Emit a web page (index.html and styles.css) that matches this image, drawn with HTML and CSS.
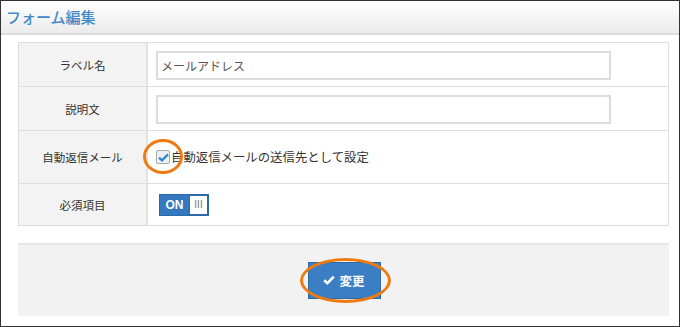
FILE: index.html
```html
<!DOCTYPE html>
<html lang="ja">

<head>
    <meta charset="UTF-8">
    <title>フォーム編集</title>
    <link rel="stylesheet" href="styles.css">
</head>

<body>
    <div class="panel">
        <header class="panel-head">
            <h1>フォーム編集</h1>
        </header>

        <div class="panel-body">
            <div class="formTable">
                <div class="row">
                    <div class="label">ラベル名</div>
                    <div class="value">
                        <input class="textInput" type="text" value="メールアドレス">
                    </div>
                </div>
                <div class="row">
                    <div class="label">説明文</div>
                    <div class="value">
                        <input class="textInput" type="text" value="">
                    </div>
                </div>
                <div class="row row-tall">
                    <div class="label">自動返信メール</div>
                    <div class="value">
                        <label class="check">
                            <span class="checkBox">
                                <svg width="11" height="9" viewBox="0 0 11 9"><path d="M1 4.6 L4 7.4 L10 1.4" fill="none" stroke="#2f86c8" stroke-width="2.2"/></svg>
                            </span>
                            <span class="checkText">自動返信メールの送信先として設定</span>
                            <span class="mark mark-check"></span>
                        </label>
                    </div>
                </div>
                <div class="row row-last">
                    <div class="label">必須項目</div>
                    <div class="value">
                        <div class="switch">
                            <span class="switch-on">ON</span>
                            <span class="switch-handle">III</span>
                        </div>
                    </div>
                </div>
            </div>

            <div class="actions">
                <button class="btnSubmit" type="button">
                    <svg width="12" height="10" viewBox="0 0 12 10"><path d="M1.2 5.2 L4.4 8.2 L10.8 1.6" fill="none" stroke="#fff" stroke-width="2.6"/></svg>
                    変更
                    <span class="mark mark-btn"></span>
                </button>
            </div>
        </div>
    </div>
</body>

</html>
```

FILE: styles.css
```css
* {
    margin: 0;
    padding: 0;
    box-sizing: border-box;
}

html,
body {
    width: 100%;
    height: 100%;
    background: #fff;
    font-family: "Noto Sans CJK JP", "Noto Sans", sans-serif;
    color: #333;
}

.panel {
    width: 680px;
    height: 327px;
    border: solid 1px #333;
    display: flex;
    flex-direction: column;
}

.panel-head {
    height: 34px;
    background: linear-gradient(#ffffff, #ebebeb);
    border-bottom: solid 2px #dcdcdc;
    padding-left: 5px;
    display: flex;
    align-items: center;
}

.panel-head h1 {
    font-size: 15px;
    font-weight: 500;
    color: #4388c6;
    margin-top: -1px;
}

.panel-body {
    padding: 7px 10px 0 17px;
}

.formTable {
    border: solid 1px #dedede;
}

.row {
    display: grid;
    grid-template-columns: 129px 1fr;
    height: 44px;
    border-bottom: solid 1px #dedede;
}

.row-tall {
    height: 53px;
}

.row-last {
    height: 41px;
    border-bottom: none;
}

.label {
    background: #f3f3f3;
    border-right: solid 2px #e2e2e2;
    font-size: 11.5px;
    display: flex;
    align-items: center;
    justify-content: center;
}

.value {
    display: flex;
    align-items: center;
    padding-left: 8px;
}

.textInput {
    width: 455px;
    height: 29px;
    border: solid 2px #dcdcdc;
    padding: 0 3px;
    font-family: inherit;
    font-size: 12px;
    color: #555;
    background: #fff;
    margin-top: 1px;
}

.check {
    position: relative;
    display: flex;
    align-items: center;
    font-size: 12.4px;
}

.checkBox {
    width: 14px;
    height: 14px;
    border: solid 1px #a9a9a9;
    border-radius: 2px;
    background: #eef1f4;
    display: flex;
    align-items: center;
    justify-content: center;
    margin-right: 1px;
}

.mark {
    position: absolute;
    border: solid 3px #f07a10;
    border-radius: 50%;
}

.mark-check {
    left: -13px;
    top: -9px;
    width: 40px;
    height: 35px;
}

.switch {
    display: flex;
    width: 50px;
    height: 22px;
    margin-left: 3px;
    background: #3479bf;
    border: solid 1px #2d6ba8;
}

.switch-on {
    width: 29px;
    color: #fff;
    font-family: "Liberation Sans", sans-serif;
    font-weight: bold;
    font-size: 12px;
    display: flex;
    align-items: center;
    justify-content: center;
}

.switch-handle {
    flex: 1;
    background: #fff;
    border: solid 1px #2d6ba8;
    color: #777;
    font-family: "Liberation Sans", sans-serif;
    font-size: 10px;
    display: flex;
    align-items: center;
    justify-content: center;
}

.actions {
    margin-top: 17px;
    height: 73px;
    background: #f2f2f2;
    border-top: solid 2px #e6e6e6;
    display: flex;
    align-items: center;
    justify-content: center;
}

.btnSubmit {
    position: relative;
    width: 73px;
    height: 37px;
    background: #3a7fc3;
    border: solid 1px #2c6aa6;
    color: #fff;
    font-family: inherit;
    font-size: 12.5px;
    font-weight: bold;
    display: flex;
    align-items: center;
    justify-content: center;
    gap: 4px;
    margin-left: 1px;
    margin-top: -1px;
}

.mark-btn {
    left: -9px;
    top: -5px;
    width: 91px;
    height: 45px;
}
```
